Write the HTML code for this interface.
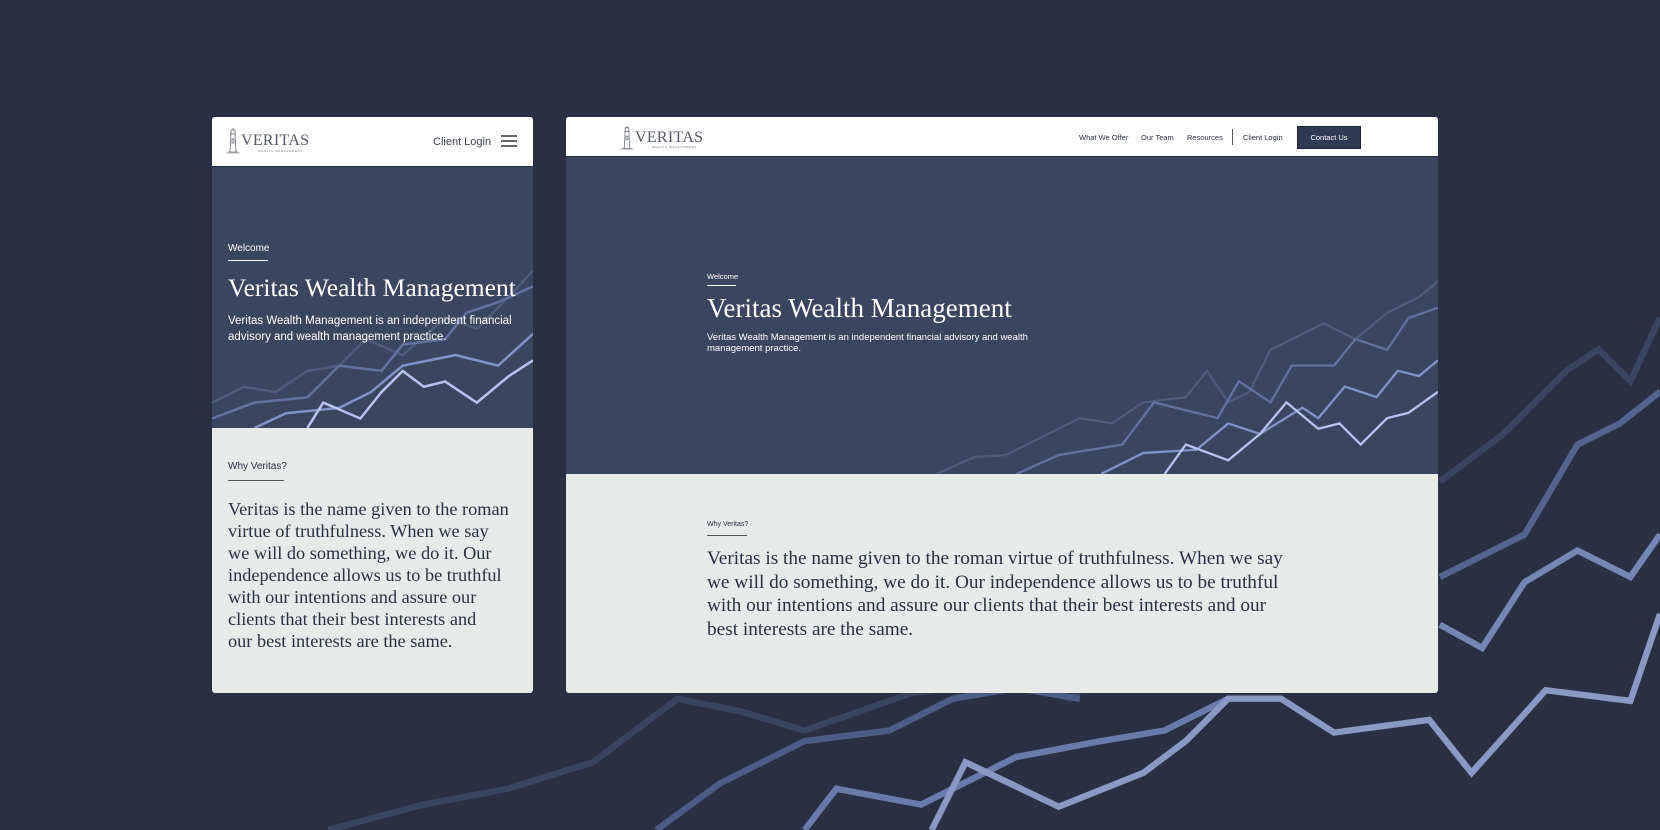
<!DOCTYPE html>
<html><head><meta charset="utf-8"><style>
*{margin:0;padding:0;box-sizing:border-box}
body{width:1660px;height:830px;background:#2a3043;position:relative;overflow:hidden;font-family:"Liberation Sans",sans-serif}
.bg{position:absolute;left:0;top:0}
.card{position:absolute;background:#e6eae8;overflow:hidden;border-radius:3px}
.hdr{position:absolute;left:0;top:0;right:0;background:#fff;border-bottom:1px solid #2a3043}
.hero{position:absolute;left:0;right:0;background:#3a455f;overflow:hidden}
.hero svg{position:absolute;left:0;top:0}
.serif{font-family:"Liberation Serif",serif;font-weight:normal}
.ab{position:absolute;white-space:nowrap}
.logo{position:absolute;display:flex;align-items:flex-end;color:#555a66}
.logo .v{font-family:"Liberation Serif",serif;font-size:16px;letter-spacing:.3px;line-height:1}
.logo .wm{position:absolute;font-size:3px;letter-spacing:.6px;color:#777}
</style></head><body>
<svg class="bg" width="1660" height="830" viewBox="0 0 1568 784" preserveAspectRatio="none" fill="none" stroke-linejoin="miter">
<polyline stroke="#394461" stroke-width="6" points="310,784 400,760 480,745 560,720 640,660 700,672 760,690 860,655 960,640 1010,660 1060,620"/>
<polyline stroke="#394461" stroke-width="6" points="1360,455 1420,410 1480,350 1510,330 1540,360 1568,300"/>
<polyline stroke="#4d5c86" stroke-width="6" points="620,784 680,740 760,700 840,690 900,660 960,650 1020,660"/>
<polyline stroke="#55648f" stroke-width="6" points="1360,545 1440,505 1490,420 1530,400 1568,370"/>
<polyline stroke="#6a7bab" stroke-width="6" points="760,784 790,745 870,760 960,715 1040,700 1100,690 1160,660"/>
<polyline stroke="#7586b4" stroke-width="6" points="1360,590 1400,612 1440,550 1490,520 1540,545 1568,505"/>
<polyline stroke="#8a99c4" stroke-width="6" points="880,784 912,720 1000,762 1080,730 1120,700 1160,660 1210,660 1260,692 1350,680 1390,730 1460,652 1540,662 1568,580"/>
</svg>

<!-- mobile card -->
<div class="card" style="left:212px;top:117px;width:321px;height:576px">
 <div class="hdr" style="height:50px">
  <div class="logo" style="left:14px;top:8px;height:30px">
   <svg width="14" height="28" viewBox="0 0 14 28" fill="none" stroke="#666b76" stroke-width="0.8"><path d="M7 1v2M5 3h4v4H5zM4 7h6M5 7l-1 18h6L9 7M2 25h10M6 12h2v4H6z"/><path d="M-6 26h26" stroke-width=".6"/></svg>
   <span class="v" style="margin-left:1px;margin-bottom:6px">VERITAS</span>
   <span class="wm" style="left:32px;top:24px">WEALTH MANAGEMENT</span>
  </div>
  <div class="ab" style="left:221px;top:19px;font-size:11px;color:#3a3f4c">Client Login</div>
  <div class="ab" style="left:289px;top:18px;width:16px;height:2px;background:#666;box-shadow:0 5px 0 #666,0 10px 0 #666"></div>
 </div>
 <div class="hero" style="top:50px;height:261px">
  <svg width="321" height="261" viewBox="200 157 303 247" preserveAspectRatio="none" fill="none" stroke-width="2.4">
   <polyline stroke="#4f5b7b" points="200,380 230,365 260,370 290,350 320,345 345,320 380,335 420,300 450,310 480,280 503,255"/>
   <polyline stroke="#62729d" points="200,395 240,380 290,375 320,345 360,350 380,325 420,320 440,295 470,285 503,270"/>
   <polyline stroke="#8192c4" points="240,404 270,390 320,385 350,370 380,345 430,335 470,345 503,315"/>
   <polyline stroke="#b7c3ee" points="290,404 305,380 340,395 360,370 380,350 400,365 420,360 450,380 480,355 503,340"/>
  </svg>
  <div class="ab" style="left:16px;top:76px;font-size:10px;color:#fff">Welcome</div>
  <div class="ab" style="left:16px;top:93px;width:40px;height:1px;background:#fff"></div>
  <div class="ab serif" style="left:16px;top:106px;font-size:25.5px;color:#fff">Veritas Wealth Management</div>
  <div class="ab" style="left:16px;top:146px;font-size:11.5px;line-height:16px;color:#fff">Veritas Wealth Management is an independent financial<br>advisory and wealth management practice.</div>
 </div>
 <div class="ab" style="left:16px;top:344px;font-size:10px;color:#2a3043">Why Veritas?</div>
 <div class="ab" style="left:16px;top:363px;width:56px;height:1px;background:#555"></div>
 <div class="ab serif" style="left:16px;top:381px;font-size:18.3px;line-height:22px;color:#2a3043">Veritas is the name given to the roman<br>virtue of truthfulness. When we say<br>we will do something, we do it. Our<br>independence allows us to be truthful<br>with our intentions and assure our<br>clients that their best interests and<br>our best interests are the same.</div>
</div>

<!-- desktop card -->
<div class="card" style="left:566px;top:117px;width:872px;height:576px">
 <div class="hdr" style="height:40px">
  <div class="logo" style="left:54px;top:6px;height:28px">
   <svg width="14" height="26" viewBox="0 0 14 28" fill="none" stroke="#666b76" stroke-width="0.8"><path d="M7 1v2M5 3h4v4H5zM4 7h6M5 7l-1 18h6L9 7M2 25h10M6 12h2v4H6z"/><path d="M-6 26h26" stroke-width=".6"/></svg>
   <span class="v" style="margin-left:1px;margin-bottom:5px">VERITAS</span>
   <span class="wm" style="left:32px;top:22px">WEALTH MANAGEMENT</span>
  </div>
  <div class="ab" style="left:513px;top:16px;font-size:7.5px;color:#2a3043">What We Offer</div>
  <div class="ab" style="left:575px;top:16px;font-size:7.5px;color:#2a3043">Our Team</div>
  <div class="ab" style="left:621px;top:16px;font-size:7.5px;color:#2a3043">Resources</div>
  <div class="ab" style="left:666px;top:12px;width:1px;height:16px;background:#555"></div>
  <div class="ab" style="left:677px;top:16px;font-size:7.5px;color:#2a3043">Client Login</div>
  <div class="ab" style="left:731px;top:9px;width:64px;height:23px;background:#2f3a55;border:1px solid #1e2436;color:#fff;font-size:7.5px;text-align:center;line-height:21px">Contact Us</div>
 </div>
 <div class="hero" style="top:40px;height:317px">
  <svg width="872" height="317" viewBox="535 147 823 301" preserveAspectRatio="none" fill="none" stroke-width="2.2">
   <polyline stroke="#4f5b7b" points="885,448 920,432 950,430 990,410 1020,395 1050,400 1080,380 1120,375 1140,350 1160,380 1180,370 1200,330 1250,305 1280,320 1310,295 1340,280 1358,265"/>
   <polyline stroke="#62729d" points="960,448 1000,430 1060,420 1090,380 1150,395 1170,360 1200,380 1220,345 1260,345 1280,320 1310,330 1330,300 1358,290"/>
   <polyline stroke="#8192c4" points="1040,448 1080,428 1130,425 1160,400 1190,410 1230,385 1245,395 1270,365 1300,375 1320,350 1340,355 1358,340"/>
   <polyline stroke="#b7c3ee" points="1100,448 1120,420 1160,435 1190,410 1215,380 1245,405 1265,400 1285,420 1310,395 1330,390 1358,370"/>
  </svg>
  <div class="ab" style="left:141px;top:115px;font-size:7.5px;color:#fff">Welcome</div>
  <div class="ab" style="left:141px;top:128px;width:29px;height:1px;background:#fff"></div>
  <div class="ab serif" style="left:141px;top:136px;font-size:27px;color:#fff">Veritas Wealth Management</div>
  <div class="ab" style="left:141px;top:175px;font-size:9.5px;line-height:11px;color:#fff">Veritas Wealth Management is an independent financial advisory and wealth<br>management practice.</div>
 </div>
 <div class="ab" style="left:141px;top:404px;font-size:7px;color:#2a3043">Why Veritas?</div>
 <div class="ab" style="left:141px;top:418px;width:40px;height:1px;background:#555"></div>
 <div class="ab serif" style="left:141px;top:430px;font-size:19.3px;line-height:23.5px;color:#2a3043">Veritas is the name given to the roman virtue of truthfulness. When we say<br>we will do something, we do it. Our independence allows us to be truthful<br>with our intentions and assure our clients that their best interests and our<br>best interests are the same.</div>
</div>
</body></html>
